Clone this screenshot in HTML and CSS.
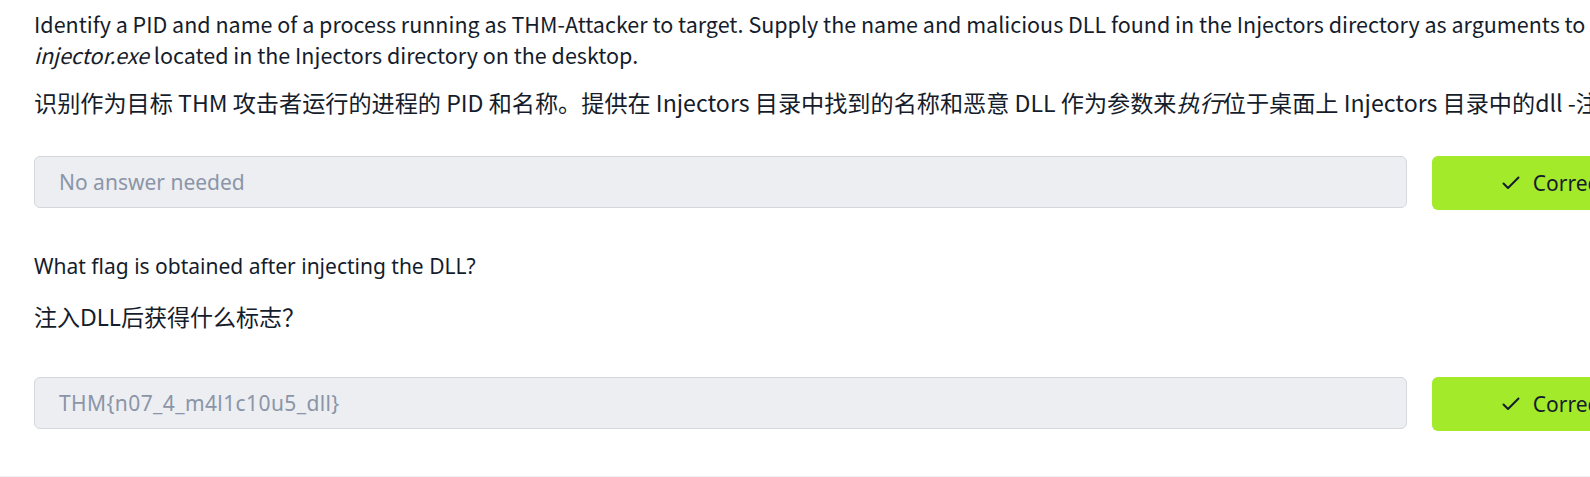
FILE: index.html
```html
<!DOCTYPE html>
<html lang="en">
<head>
<meta charset="utf-8">
<title>Task</title>
<link rel="stylesheet" href="styles.css">
</head>
<body>
<div class="task">
  <div class="question">
    <p class="q-en">Identify a PID and name of a process running as THM-Attacker to target. Supply the name and malicious DLL found in the Injectors directory as arguments to <em>injector.exe</em> located in the Injectors directory on the desktop.</p>
    <p class="q-zh">识别作为目标 THM 攻击者运行的进程的 PID 和名称。提供在 Injectors 目录中找到的名称和恶意 DLL 作为参数来<em>执行</em>位于桌面上 Injectors 目录中的dll -注入</p>
  </div>
  <div class="answer-row">
    <div class="answer-input">No answer needed</div>
    <button class="btn-correct"><svg class="check" viewBox="0 0 18 14" width="18" height="14"><path d="M1.5 7.5 L6 12 L16.5 1.5" fill="none" stroke="#151c2b" stroke-width="2" stroke-linecap="round" stroke-linejoin="round"/></svg><span>Correct Answer</span></button>
  </div>
  <div class="question q2">
    <p class="q-plain">What flag is obtained after injecting the DLL?</p>
    <p class="q-zh2">注入DLL后获得什么标志？</p>
  </div>
  <div class="answer-row answer-row-last">
    <div class="answer-input answer-flag">THM{n07_4_m4l1c10u5_dll}</div>
    <button class="btn-correct"><svg class="check" viewBox="0 0 18 14" width="18" height="14"><path d="M1.5 7.5 L6 12 L16.5 1.5" fill="none" stroke="#151c2b" stroke-width="2" stroke-linecap="round" stroke-linejoin="round"/></svg><span>Correct Answer</span></button>
  </div>
</div>
</body>
</html>
```

FILE: styles.css
```css
html, body {
  margin: 0;
  padding: 0;
  background: #ffffff;
  overflow: hidden;
}

body {
  width: 1590px;
  height: 477px;
  color: #151c2b;
}

.task {
  width: 1720px;
  padding: 0 0 0 34px;
  height: 476px;
  border-bottom: 1px solid #eef0f3;
  box-sizing: content-box;
}

.question {
  width: 1620px;
}

.question p {
  margin: 0;
}

.q-en {
  padding-top: 8px;
  font-family: "Noto Sans CJK SC", sans-serif;
  font-size: 21.5px;
  line-height: 31px;
}

.q-en em {
  font-style: italic;
}

.q-zh {
  margin-top: 16px !important;
  font-family: "Noto Sans CJK SC", sans-serif;
  font-size: 23.15px;
  line-height: 32px;
}

.q-zh em {
  font-style: italic;
}

.answer-row {
  display: flex;
  gap: 25px;
  align-items: flex-start;
  margin-top: 38px;
}

.answer-input {
  flex: 1;
  height: 52px;
  box-sizing: border-box;
  background: #eceef2;
  border: 1px solid #d3d7de;
  border-radius: 6px;
  padding: 0 24px;
  display: flex;
  align-items: center;
  font-family: "Noto Sans", sans-serif;
  font-size: 21px;
  color: #8b95a7;
}

.answer-flag {
  letter-spacing: 0.4px;
}

.btn-correct {
  flex: none;
  width: 322px;
  height: 54px;
  background: #a3ea2a;
  border: none;
  border-radius: 6px;
  display: flex;
  align-items: center;
  justify-content: center;
  gap: 13px;
  font-family: "Noto Sans", sans-serif;
  font-size: 21px;
  color: #151c2b;
  padding: 0;
}

.check {
  flex: none;
}

.q2 {
  margin-top: 42px;
}

.q-plain {
  font-family: "Noto Sans", sans-serif;
  font-size: 21px;
  line-height: 28px;
}

.q-zh2 {
  margin-top: 21px !important;
  font-family: "Noto Sans", "Noto Sans CJK SC", sans-serif;
  font-size: 23px;
  line-height: 32px;
}

.answer-row-last {
  margin-top: 44px;
}
```
